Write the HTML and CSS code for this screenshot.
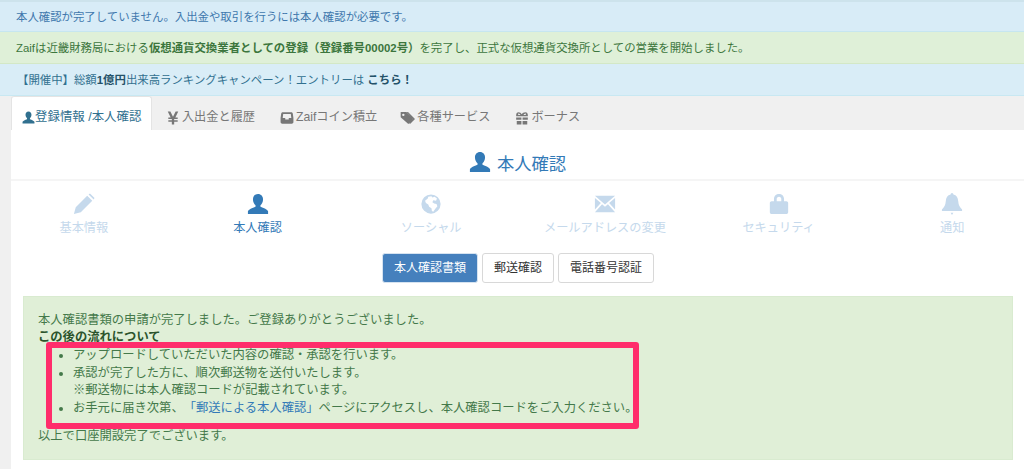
FILE: index.html
```html
<!DOCTYPE html>
<html lang="ja">
<head>
<meta charset="utf-8">
<title>本人確認</title>
<link rel="stylesheet" href="styles.css">
</head>
<body>
<svg class="defs" width="0" height="0" aria-hidden="true">
  <symbol id="i-user" viewBox="0 0 24 24"><path d="M12 1C8.600 1 6.500 3.600 6.500 7c0 2.600 1.200 5 2.800 6.300V15C5.800 16.400 1.500 18 1 20v3h22v-3c-.5-2-4.800-3.600-8.300-5v-1.700c1.600-1.300 2.800-3.700 2.800-6.300 0-3.400-2.100-6-5.500-6z"/></symbol>
  <symbol id="i-pencil" viewBox="0 0 24 24"><path d="M1 23l2-7.500L15.500 3l5.500 5.500L8.500 21zM17 1.500l1.500-1 5 5-1 1.500z"/></symbol>
  <symbol id="i-globe" viewBox="0 0 24 24"><path fill-rule="evenodd" d="M12 1.500a10.500 10.500 0 1 0 0 21 10.500 10.500 0 0 0 0-21zM9 4l3.500-.5 1 1.500L16 4l2.500 2-1 2.500-3-.5-1 2 2 1.500 2.500.5 1 2.500-2.500 3-2 3-1.500-1-.5-3-2.500-1.500-1-2.500-2.500-1.500-1-2.500 3-2.500z"/></symbol>
  <symbol id="i-mail" viewBox="0 0 24 24"><path d="M1 3h22L12 12.500zM1 5.500V18l6.500-7zM23 5.500V18l-6.500-7zM8.800 12.300L12 15l3.200-2.700L23 21H1z"/></symbol>
  <symbol id="i-lock" viewBox="0 0 24 24"><path fill-rule="evenodd" d="M6.500 9V6.500C6.500 3 9 1 12 1s5.500 2 5.500 5.500V9H20c1 0 2 .8 2 2v10c0 1.200-1 2-2 2H4c-1 0-2-.8-2-2V11c0-1.200 1-2 2-2zM9.500 9h5V6.500C14.500 5 13.500 4 12 4S9.500 5 9.500 6.500z"/></symbol>
  <symbol id="i-bell" viewBox="0 0 24 24"><path d="M12 0c1 0 1.500.8 1.500 1.600C17 2.400 18.500 5 18.800 9c.3 4.500 1.700 6.500 4.200 9v1.500H1V18c2.500-2.500 3.900-4.500 4.200-9 .3-4 1.800-6.600 5.300-7.400C10.500.8 11 0 12 0zM10.500 21.500h3L12 24z"/></symbol>
  <symbol id="i-yen" viewBox="0 0 24 24"><path d="M3 1h4.500L12 10l4.500-9H21l-5 10h4v2.500h-6V16h6v2.500h-6V23h-4v-4.500H4V16h6v-2.500H4V11h4z"/></symbol>
  <symbol id="i-inbox" viewBox="0 0 24 24"><path fill-rule="evenodd" d="M5 2h14c1.500 0 2.500.8 3 2.500l1 7.500v7c0 1.700-1.300 3-3 3H4c-1.700 0-3-1.300-3-3v-7l1-7.500C2.500 2.800 3.500 2 5 2zM5.500 5L4.600 12H9v2.500h6V12h4.400l-.9-7z"/></symbol>
  <symbol id="i-tags" viewBox="0 0 24 24"><path fill-rule="evenodd" d="M1 3h8.500L20 13.500 12.500 21 1 11zM5 5.500a1.800 1.800 0 1 0 0 3.600 1.800 1.800 0 0 0 0-3.600zM12 3l10.500 10.500L15 21l-1.200-1 6-6.500L10 3z"/></symbol>
  <symbol id="i-gift" viewBox="0 0 24 24"><path fill-rule="evenodd" d="M2 7c0-3 1.500-5 4-5 2.500 0 4.500 1.500 5.500 3.500C12.500 3.500 15 2 18 2c2.500 0 4 2 4 5v2H2zM5.500 4.500C5 5.500 5.500 7 7 7h2.500C8.500 5.500 7 4 5.500 4.500zM18.500 4.500C17 4 15.500 5.500 14.500 7H17c1.500 0 2-1.500 1.500-2.500zM2 11h9v4H2zM13 11h9v4h-9zM3 17h8v6H3zM13 17h8v6h-8z"/></symbol>
</svg>

<div class="alert alert-info first">本人確認が完了していません。入出金や取引を行うには本人確認が必要です。</div>
<div class="alert alert-success">Zaifは近畿財務局における<strong>仮想通貨交換業者としての登録（登録番号00002号）</strong>を完了し、正式な仮想通貨交換所としての営業を開始しました。</div>
<div class="alert alert-notice">【開催中】総額<strong>1億円</strong>出来高ランキングキャンペーン！エントリーは <a class="notice-link" href="#">こちら！</a></div>

<nav class="tabs">
  <a class="tab active" href="#"><svg class="tab-icon"><use href="#i-user"/></svg>登録情報 /本人確認</a>
  <a class="tab" href="#"><svg class="tab-icon gap"><use href="#i-yen"/></svg>入出金と履歴</a>
  <a class="tab" href="#"><svg class="tab-icon gap"><use href="#i-inbox"/></svg>Zaifコイン積立</a>
  <a class="tab" href="#"><svg class="tab-icon wide"><use href="#i-tags"/></svg>各種サービス</a>
  <a class="tab" href="#"><svg class="tab-icon gap"><use href="#i-gift"/></svg>ボーナス</a>
</nav>

<main class="content">
  <h1 class="title"><svg class="title-icon"><use href="#i-user"/></svg>本人確認</h1>

  <div class="steps">
    <a class="step" href="#"><svg class="step-icon"><use href="#i-pencil"/></svg><span>基本情報</span></a>
    <a class="step current" href="#"><svg class="step-icon"><use href="#i-user"/></svg><span>本人確認</span></a>
    <a class="step" href="#"><svg class="step-icon"><use href="#i-globe"/></svg><span>ソーシャル</span></a>
    <a class="step" href="#"><svg class="step-icon"><use href="#i-mail"/></svg><span>メールアドレスの変更</span></a>
    <a class="step" href="#"><svg class="step-icon"><use href="#i-lock"/></svg><span>セキュリティ</span></a>
    <a class="step" href="#"><svg class="step-icon"><use href="#i-bell"/></svg><span>通知</span></a>
  </div>

  <div class="buttons">
    <a class="btn primary" href="#">本人確認書類</a>
    <a class="btn" href="#">郵送確認</a>
    <a class="btn" href="#">電話番号認証</a>
  </div>

  <section class="panel">
    <p class="panel-line">本人確認書類の申請が完了しました。ご登録ありがとうございました。</p>
    <p class="panel-line"><strong>この後の流れについて</strong></p>
    <ul class="flow">
      <li>アップロードしていただいた内容の確認・承認を行います。</li>
      <li>承認が完了した方に、順次郵送物を送付いたします。<br>※郵送物には本人確認コードが記載されています。</li>
      <li>お手元に届き次第、<a class="flow-link" href="#">「郵送による本人確認」</a>ページにアクセスし、本人確認コードをご入力ください。</li>
    </ul>
    <p class="panel-line">以上で口座開設完了でございます。</p>
    <div class="highlight"></div>
  </section>
</main>
</body>
</html>
```

FILE: styles.css
```css
* { box-sizing: border-box; }
html, body { margin: 0; height: 469px; overflow: hidden; }
body {
  background: #f0f0f0;
  font-family: "Liberation Sans", "Noto Sans CJK JP", sans-serif;
  font-size: 12px;
  line-height: 17.500px;
  text-spacing-trim: space-all;
}
.defs { position: absolute; }
a { text-decoration: none; }

.alert {
  height: 32px;
  padding-left: 16px;
  display: block;
  font-size: 11.400px;
  line-height: 32px;
  border-bottom: 1px solid;
  white-space: nowrap;
}
.alert-info { background: #d8ecf7; border-color: #c6e6f0; color: #3f78ad; }
.first { border-top: 2px solid #cde3ec; line-height: 31px; }
.alert-success { background: #dff0d8; border-color: #d3e8c6; color: #3c763d; }
.alert-notice { background: #d9edf7; border-color: #c8e8f2; color: #31708f; padding-left: 17px; }
.alert-notice strong { color: #245269; }
.notice-link { font-weight: bold; color: #245269; }

.tabs {
  height: 34px;
  padding-left: 11px;
  display: flex;
  align-items: stretch;
  font-size: 12.200px;
}
.tab {
  display: flex;
  align-items: center;
  padding-top: 8px;
  color: #777;
  padding-left: 11.500px;
  padding-right: 11.500px;
  white-space: nowrap;
  border: 1px solid transparent;
  border-bottom: 0;
}
.tab.active {
  background: #fff;
  color: #31708f;
  font-size: 12.450px;
  border-color: #e4e4e4;
  border-radius: 3px 3px 0 0;
  padding-left: 10px;
  padding-right: 10px;
  margin-right: 1px;
}
.tab-icon { width: 13px; height: 13px; fill: currentColor; flex: none; margin-right: 0; }
.tab-icon.gap { width: 14px; height: 14px; margin-right: 2px; }
.tab-icon.wide { width: 16px; height: 16px; margin-left: -2px; margin-right: 1px; }

.content {
  margin-left: 11px;
  background: #fff;
  height: 339px;
}
.title {
  margin: 0;
  height: 51px;
  padding-top: 21px;
  border-bottom: 2px solid #f5f5f5;
  text-align: center;
  color: #337ab7;
  font-size: 17.300px;
  font-weight: normal;
  line-height: 26px;
  display: flex;
  justify-content: center;
  align-items: flex-start;
  gap: 6px;
}
.title-icon { width: 22px; height: 22px; fill: currentColor; }

.steps {
  display: grid;
  grid-template-columns: repeat(6, 173.700px);
  margin: 12px -14px 0;
  height: 46px;
  font-size: 12.200px;
}
.step {
  display: flex;
  flex-direction: column;
  align-items: center;
  color: #c5d9ec;
  white-space: nowrap;
}
.step.current { color: #337ab7; }
.step-icon { width: 22px; height: 22px; fill: currentColor; margin-bottom: 4px; }
.step span { line-height: 18px; }

.buttons {
  display: flex;
  justify-content: center;
  gap: 4px;
  margin-top: 14px;
  padding-left: 1px;
}
.btn {
  height: 30px;
  line-height: 28px;
  padding: 0 11px;
  border: 1px solid #d8d8d8;
  border-radius: 3px;
  background: #fff;
  color: #333;
  white-space: nowrap;
}
.btn.primary { background: #4580bd; border-color: #d6e3f0; color: #fff; }

.panel {
  position: relative;
  margin: 13px 11px 0 12px;
  height: 164px;
  padding: 16px 14px 14px;
  background: #e0efd7;
  border: 1px solid #d9ebd0;
  color: #44794a;
  font-size: 12.300px;
}
.panel-line { margin: 0; margin-top: -1px; height: 18px; }
.panel-line strong { color: #2b542c; }
.flow {
  margin: 0 0 12px;
  padding: 0 0 0 35px;
  list-style: disc;
}
.flow-link { color: #337ab7; }
.highlight {
  position: absolute;
  left: 22px;
  top: 45px;
  width: 593px;
  height: 87px;
  border: 6px solid #ff2d6b;
  border-radius: 3px;
}
```
